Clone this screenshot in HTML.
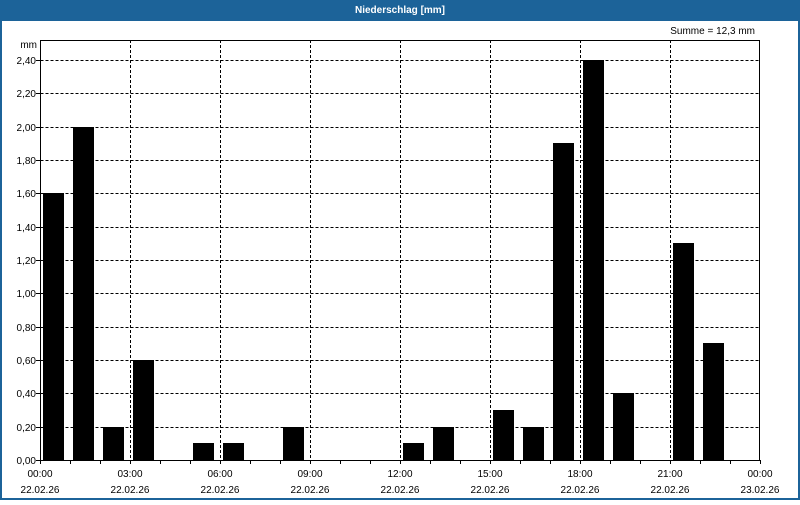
<!DOCTYPE html>
<html><head><style>
body{margin:0;width:800px;height:500px;overflow:hidden;background:#fff;font-family:"Liberation Sans",sans-serif}
</style></head><body>
<svg width="800" height="500" xmlns="http://www.w3.org/2000/svg" font-family="Liberation Sans, sans-serif" font-size="10">
<rect x="0" y="0" width="800" height="500" fill="#1c6399"/>
<rect x="2" y="21" width="796" height="477" fill="#fff"/>
<text x="400" y="13" fill="#fff" font-weight="bold" font-size="10" text-anchor="middle">Niederschlag [mm]</text>
<text x="755" y="34" fill="#000" text-anchor="end">Summe = 12,3 mm</text>
<text x="37" y="48" text-anchor="end">mm</text>
<g stroke="#000" stroke-dasharray="3,2" stroke-width="1">
<path d="M40.5 427.5H760M40.5 393.5H760M40.5 360.5H760M40.5 327.5H760M40.5 293.5H760M40.5 260.5H760M40.5 227.5H760M40.5 193.5H760M40.5 160.5H760M40.5 127.5H760M40.5 93.5H760M40.5 60.5H760"/>
<path d="M130.5 40V460M220.5 40V460M310.5 40V460M400.5 40V460M490.5 40V460M580.5 40V460M670.5 40V460"/>
</g>
<g fill="#000">
<rect x="43" y="193" width="21" height="267"/>
<rect x="73" y="127" width="21" height="333"/>
<rect x="103" y="427" width="21" height="33"/>
<rect x="133" y="360" width="21" height="100"/>
<rect x="193" y="443" width="21" height="17"/>
<rect x="223" y="443" width="21" height="17"/>
<rect x="283" y="427" width="21" height="33"/>
<rect x="403" y="443" width="21" height="17"/>
<rect x="433" y="427" width="21" height="33"/>
<rect x="493" y="410" width="21" height="50"/>
<rect x="523" y="427" width="21" height="33"/>
<rect x="553" y="143" width="21" height="317"/>
<rect x="583" y="60" width="21" height="400"/>
<rect x="613" y="393" width="21" height="67"/>
<rect x="673" y="243" width="21" height="217"/>
<rect x="703" y="343" width="21" height="117"/>
</g>
<rect x="40.5" y="40.5" width="719" height="420" fill="none" stroke="#000"/>
<g stroke="#000">
<path d="M40.5 460V464M70.5 460V464M100.5 460V464M130.5 460V464M160.5 460V464M190.5 460V464M220.5 460V464M250.5 460V464M280.5 460V464M310.5 460V464M340.5 460V464M370.5 460V464M400.5 460V464M430.5 460V464M460.5 460V464M490.5 460V464M520.5 460V464M550.5 460V464M580.5 460V464M610.5 460V464M640.5 460V464M670.5 460V464M700.5 460V464M730.5 460V464M760.5 460V464"/>
<path d="M36 60.5H40M36 93.5H40M36 127.5H40M36 160.5H40M36 193.5H40M36 227.5H40M36 260.5H40M36 293.5H40M36 327.5H40M36 360.5H40M36 393.5H40M36 427.5H40M36 460.5H40"/>
</g>
<g text-anchor="end">
<text x="36" y="64">2,40</text><text x="36" y="97">2,20</text><text x="36" y="131">2,00</text><text x="36" y="164">1,80</text><text x="36" y="197">1,60</text><text x="36" y="231">1,40</text><text x="36" y="264">1,20</text><text x="36" y="297">1,00</text><text x="36" y="331">0,80</text><text x="36" y="364">0,60</text><text x="36" y="397">0,40</text><text x="36" y="431">0,20</text><text x="36" y="464">0,00</text>
</g>
<g text-anchor="middle">
<text x="40" y="477">00:00</text><text x="40" y="493">22.02.26</text>
<text x="130" y="477">03:00</text><text x="130" y="493">22.02.26</text>
<text x="220" y="477">06:00</text><text x="220" y="493">22.02.26</text>
<text x="310" y="477">09:00</text><text x="310" y="493">22.02.26</text>
<text x="400" y="477">12:00</text><text x="400" y="493">22.02.26</text>
<text x="490" y="477">15:00</text><text x="490" y="493">22.02.26</text>
<text x="580" y="477">18:00</text><text x="580" y="493">22.02.26</text>
<text x="670" y="477">21:00</text><text x="670" y="493">22.02.26</text>
<text x="760" y="477">00:00</text><text x="760" y="493">23.02.26</text>
</g>
</svg>
</body></html>
